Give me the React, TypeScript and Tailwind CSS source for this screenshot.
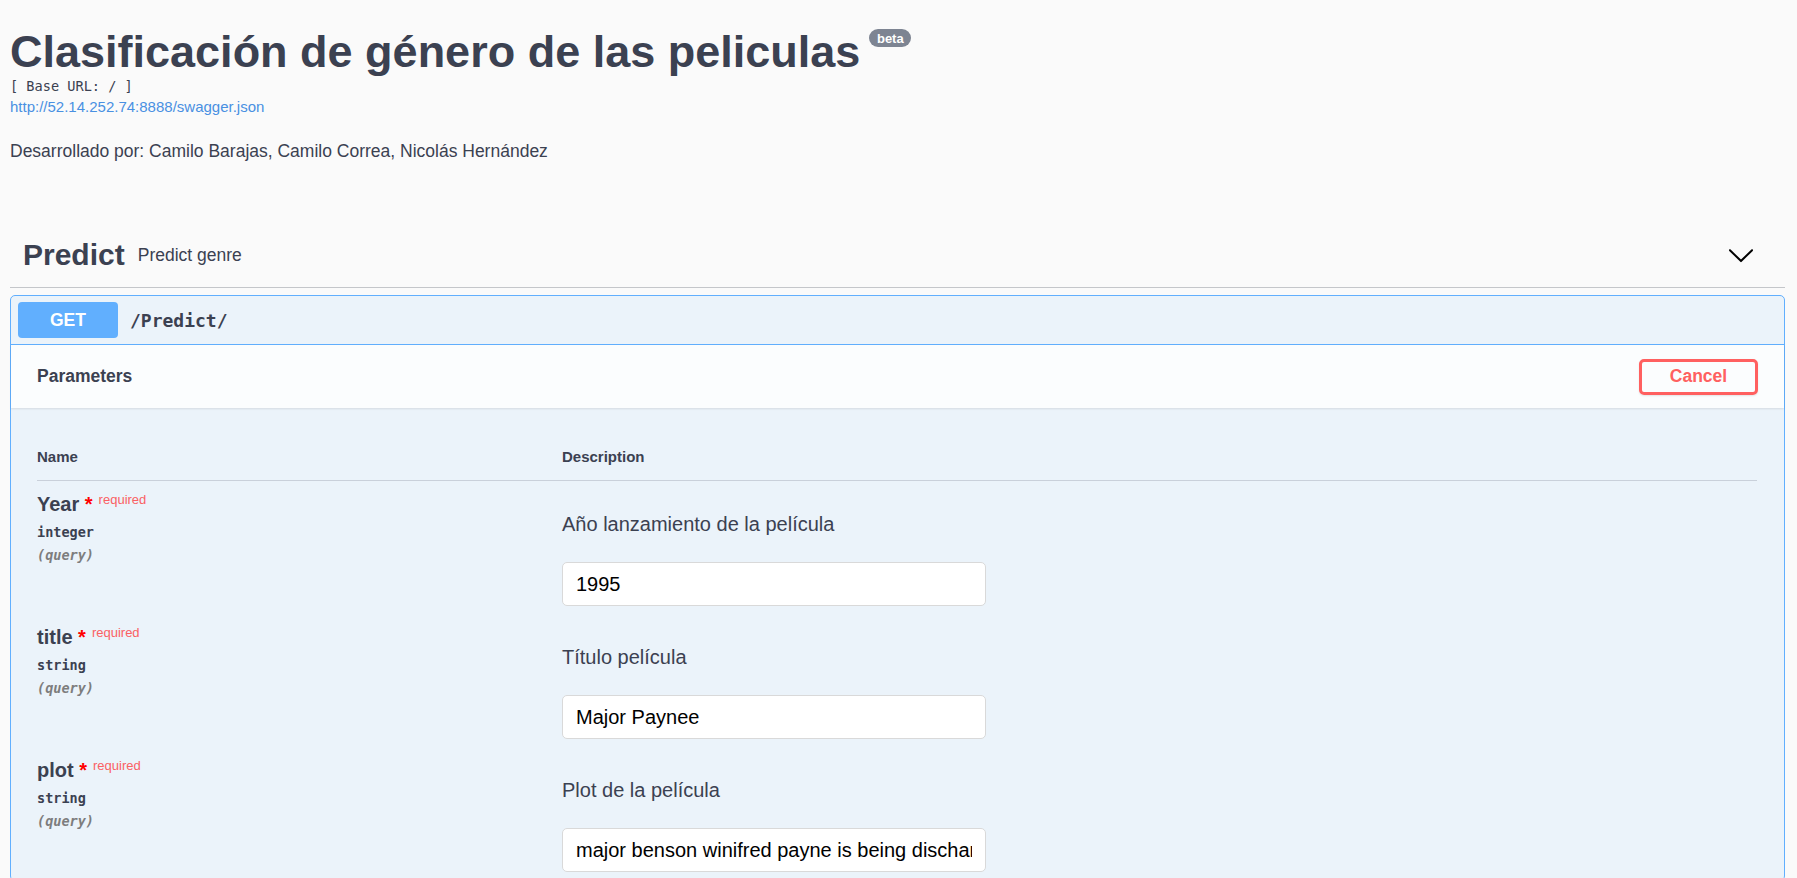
const params = [
  {
    name: "Year",
    type: "integer",
    description: "Año lanzamiento de la película",
    value: "1995",
  },
  {
    name: "title",
    type: "string",
    description: "Título película",
    value: "Major Paynee",
  },
  {
    name: "plot",
    type: "string",
    description: "Plot de la película",
    value:
      "major benson winifred payne is being discharged from the u . s . marines .",
  },
];

function Chevron() {
  return (
    <svg width="28" height="28" viewBox="0 0 20 20" className="fill-black">
      <path d="M17.418 6.109c.272-.268.709-.268.979 0s.271.701 0 .969l-7.908 7.83c-.27.268-.707.268-.979 0l-7.908-7.83c-.27-.268-.27-.701 0-.969.271-.268.709-.268.979 0L10 13.25l7.418-7.141z" />
    </svg>
  );
}

function ParamRow({ p }: { p: (typeof params)[number] }) {
  return (
    <div className="flex h-[133px] pt-[11px]">
      <div className="w-[525px]">
        <div className="text-[20px] leading-[24px] font-bold whitespace-nowrap">
          {p.name}
          <span className="text-[#ff0000]">&nbsp;*</span>
          <span className="relative -top-[7.5px] pl-[6px] text-[13px] font-normal text-[#fa6063]">
            required
          </span>
        </div>
        <div className="mt-[4px] font-['DejaVu_Sans_Mono',monospace] text-[13.5px] leading-[18px] font-bold">
          {p.type}
        </div>
        <div className="mt-[5px] font-['DejaVu_Sans_Mono',monospace] text-[13.5px] leading-[18px] font-semibold italic text-[#7d7d7d]">
          (query)
        </div>
      </div>
      <div>
        <p className="mt-[20px] text-[20px] leading-[24px]">{p.description}</p>
        <input
          readOnly
          value={p.value}
          className="mt-[26px] block h-[44px] w-[424px] rounded-[5px] border border-[#d9d9d9] bg-white px-[13px] text-[20px] text-black outline-none"
        />
      </div>
    </div>
  );
}

export default function App() {
  return (
    <div className="min-h-screen bg-[#fafafa] pl-[10px] pr-[12px] pt-[25px] font-['Liberation_Sans',Arial,sans-serif] text-[#3b4151]">
      <h1 className="flex items-start text-[45px] leading-[53px] font-bold">
        <span>Clasificación de género de las peliculas</span>
        <span className="mt-[4px] ml-[9px] flex h-[18px] w-[42px] items-center justify-center rounded-full bg-[#7d8492] text-[13px] leading-none font-bold text-white">
          beta
        </span>
      </h1>
      <pre className="font-['DejaVu_Sans_Mono',monospace] text-[13.6px] leading-[16px]">
        [ Base URL: / ]
      </pre>
      <a className="mt-[4px] block text-[15px] leading-[18px] text-[#4990e2]">
        http://52.14.252.74:8888/swagger.json
      </a>
      <p className="mt-[25px] text-[17.5px] leading-[21px]">
        Desarrollado por: Camilo Barajas, Camilo Correa, Nicolás Hernández
      </p>

      <div className="mt-[61px] flex h-[65px] items-center border-b border-[#c4c6ca] pl-[13px] pr-[30px]">
        <span className="text-[30px] leading-[36px] font-bold">Predict</span>
        <span className="flex-1 pl-[13px] text-[17.5px] leading-[21px]">Predict genre</span>
        <Chevron />
      </div>

      <div className="mt-[7px] rounded-[5px] border border-[#61affe] bg-[#ebf3fa]">
        <div className="flex items-center border-b border-[#61affe] pl-[7px] pr-[6px] py-[6px]">
          <span className="flex h-[36px] w-[100px] items-center justify-center rounded-[4px] bg-[#61affe] text-[17.5px] font-bold text-white">
            GET
          </span>
          <span className="ml-[12px] font-['DejaVu_Sans_Mono',monospace] text-[18px] font-bold">
            /Predict/
          </span>
        </div>

        <div className="flex h-[63px] items-center justify-between bg-[#fbfdfe] pl-[26px] pr-[26px] shadow-[0_1px_2px_rgba(0,0,0,0.1)]">
          <span className="text-[17.5px] font-bold">Parameters</span>
          <button className="flex h-[36px] w-[119px] items-center justify-center rounded-[5px] border-[3px] border-[#ff6060] text-[17.5px] font-bold text-[#ff6060] shadow-[0_1px_2px_rgba(0,0,0,0.1)]">
            Cancel
          </button>
        </div>

        <div className="pl-[26px] pr-[27px] pt-[25px]">
          <div className="flex border-b border-[#c9d0da] pt-[15px] pb-[14px] text-[15px] leading-[18px] font-bold">
            <div className="w-[525px]">Name</div>
            <div>Description</div>
          </div>
          {params.map((p) => (
            <ParamRow key={p.name} p={p} />
          ))}
        </div>
      </div>
    </div>
  );
}
